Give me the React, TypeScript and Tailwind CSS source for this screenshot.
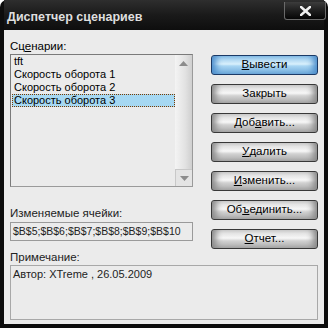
import React from "react";

const font = { fontFamily: '"Liberation Sans", Arial, sans-serif' };

function Btn({ children, primary = false }: { children: React.ReactNode; primary?: boolean }) {
  return (
    <div
      className={
        primary
          ? "flex h-[20px] items-center justify-center rounded-[3px] border border-[#1b3a66] bg-[linear-gradient(to_bottom,#8ec3ea,#d9f0fc_45%,#a9d6f3_55%,#6fa9da)] text-[11.5px] text-black shadow-[inset_8px_0_6px_-4px_#4f8fcc,inset_-8px_0_6px_-4px_#4f8fcc]"
          : "flex h-[20px] items-center justify-center rounded-[3px] border border-[#383838] bg-[linear-gradient(to_bottom,#d6d6d6,#f7f7f7_45%,#d2d2d2_60%,#a9a9a9)] text-[11.5px] text-black shadow-[inset_8px_0_6px_-4px_#8a8a8a,inset_-8px_0_6px_-4px_#8a8a8a]"
      }
    >
      {children}
    </div>
  );
}

const U = ({ c }: { c: string }) => <span className="underline underline-offset-[1px]">{c}</span>;

export default function App() {
  const items = ["tft", "Скорость оборота 1", "Скорость оборота 2", "Скорость оборота 3"];

  return (
    <div className="h-[331px] w-[330px] bg-white" style={font}>
      <div className="flex h-[328px] w-[328px] flex-col rounded-t-[7px] bg-[#0c0c0c] px-[4px] pb-[4px]">
        {/* Title bar */}
        <div className="flex h-[30px] items-center justify-between bg-[linear-gradient(to_bottom,#2e2e2e,#1a1a1a_50%,#0e0e0e)] pl-[3px]">
          <span className="mt-[5px] text-[12.5px] font-bold text-[#dedede]">Диспетчер сценариев</span>
          <div className="mb-[8px] mr-[-2px] flex h-[18px] w-[42px] items-center justify-center rounded-b-[3px] border border-t-0 border-[#6a6a6a] bg-[linear-gradient(to_bottom,#3c3c3c,#1c1c1c_55%,#050505)]">
            <svg width="11" height="10" viewBox="0 0 11 10">
              <path d="M1 1 L10 9 M10 1 L1 9" stroke="#f0f0f0" strokeWidth="2.6" strokeLinecap="square" />
            </svg>
          </div>
        </div>

        {/* Client area */}
        <div className="flex flex-1 bg-[#ebebeb] px-[6px] text-[11.5px] text-black">
          {/* Left column */}
          <div className="flex w-[183px] flex-col pt-[9px]">
            <div className="h-[14px] leading-[14px]">
              Сц<U c="е" />нарии:
            </div>
            <div className="mt-px flex h-[133px] border border-[#9a9a9a] border-t-[#7a7a7a] border-l-[#7a7a7a] text-[11px]">
              <div className="flex-1 pl-px">
                {items.map((it, i) => (
                  <div
                    key={it}
                    className={
                      i === 3
                        ? "h-[13px] whitespace-nowrap border border-dotted border-[#7a3a00] bg-[#a6d8f2] pl-[1px] leading-[11px]"
                        : "h-[13px] whitespace-nowrap pl-[2px] leading-[13px]"
                    }
                  >
                    {it}
                  </div>
                ))}
              </div>
              <div className="flex w-[17px] flex-col justify-between bg-[linear-gradient(to_right,#f4f4f4,#e2e2e2_60%,#cfcfcf)]">
                <div className="flex h-[17px] items-center justify-center">
                  <svg width="9" height="5" viewBox="0 0 9 5">
                    <path d="M0 5 L4.5 0 L9 5 Z" fill="#8c8c8c" />
                  </svg>
                </div>
                <div className="flex h-[17px] items-center justify-center border-t border-l border-[#c8c8c8] bg-[#e4e4e4]">
                  <svg width="9" height="5" viewBox="0 0 9 5">
                    <path d="M0 0 L4.5 5 L9 0 Z" fill="#8c8c8c" />
                  </svg>
                </div>
              </div>
            </div>

            <div className="mt-[19px] h-[14px] leading-[14px] text-[#222]">Изменяемые ячейки:</div>
            <div className="mt-[2px] flex h-[19px] items-center whitespace-nowrap border border-[#9a9a9a] pl-[2px] text-[10.5px] text-[#222]">
              $B$5;$B$6;$B$7;$B$8;$B$9;$B$10
            </div>

            <div className="mt-[9px] h-[14px] leading-[14px] text-[#222]">Примечание:</div>
            <div className="mt-[1px] h-[55px] w-[308px] border border-[#a8a8a8] pl-[2px] pt-px text-[11px] leading-[14px] text-[#222]">
              Автор: XTreme , 26.05.2009
            </div>
          </div>

          {/* Right column: buttons */}
          <div className="ml-[18px] flex w-[107px] flex-col gap-[9px] pt-[25px]">
            <Btn primary>
              <U c="В" />ывести
            </Btn>
            <Btn>Закрыть</Btn>
            <Btn>
              Доб<U c="а" />вить...
            </Btn>
            <Btn>
              <U c="У" />далить
            </Btn>
            <Btn>
              <U c="И" />зменить...
            </Btn>
            <Btn>
              Об<U c="ъ" />единить...
            </Btn>
            <Btn>
              <U c="О" />тчет...
            </Btn>
          </div>
        </div>
      </div>
    </div>
  );
}
